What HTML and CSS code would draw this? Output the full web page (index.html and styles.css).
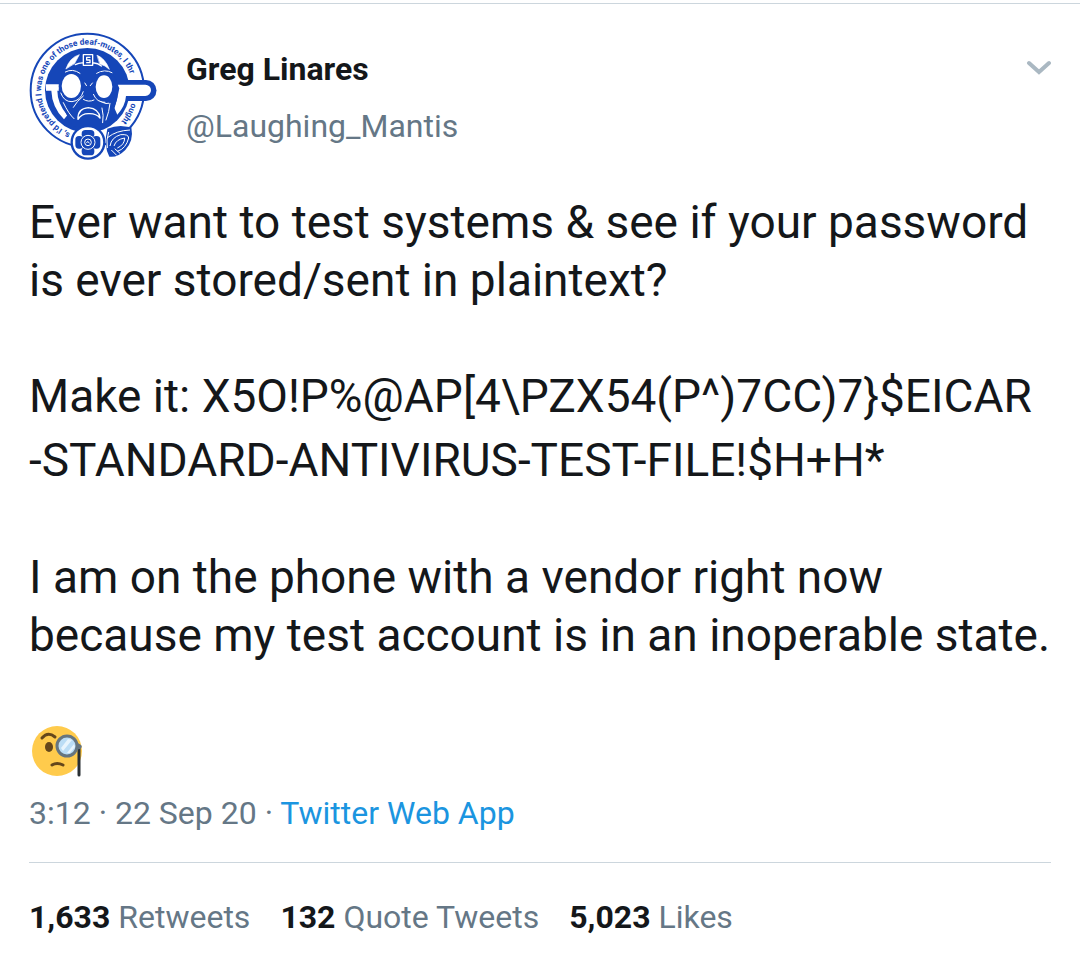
FILE: index.html
```
<!DOCTYPE html>
<html lang="en">
<head>
    <meta charset="UTF-8">
    <meta name="viewport" content="width=device-width, initial-scale=1.0">
    <title>Greg Linares (@Laughing_Mantis)</title>
    <link rel="stylesheet" href="styles.css">
</head>
<body>
    <article class="tweet">
        <header class="tweet-header">
            <svg class="avatar" viewBox="27 36 384 384" role="img" aria-label="Gas mask logo">
                <defs>
                    <path id="ring" d="M151 340 A138 138 0 1 1 338 232 A138 138 0 0 1 250 341"/>
                </defs>
                <!-- outer ring -->
                <circle cx="202" cy="211" r="170" fill="#fff" stroke="#1546b8" stroke-width="6"/>
                <circle cx="202" cy="211" r="127" fill="#1546b8"/>
                <text class="ring-text"><textPath href="#ring">s, I'd pretend I was one of those deaf-mutes, I thr<tspan dx="88">ought</tspan></textPath></text>
                <!-- bar on the left and the long visor on the right -->
                <path d="M78 193 H130 V212 H112 Q112 250 142 286 L132 298 Q96 262 94 212 H78 Z" fill="#fff"/>
                <path d="M276 180 H378 A31 31 0 0 1 378 243 H276 Z" fill="#1546b8"/>
                <path d="M288 194 H376 A17 17 0 0 1 376 228 H318 Q316 258 292 284 L282 262 Q294 240 292 220 L288 216 Z" fill="#fff"/>
                <!-- mask -->
                <path d="M126 158 Q146 96 202 92 Q264 96 278 158 L298 205 Q288 262 264 318 Q210 350 160 318 Q130 280 116 210 Z" fill="#1546b8"/>
                <g fill="none" stroke="#fff" stroke-linecap="round" stroke-linejoin="round">
                    <path d="M138 146 Q150 112 178 104 L164 130 Z" fill="#fff" stroke-width="2"/>
                    <path d="M232 106 Q256 116 268 148 Q256 136 240 132 Z" fill="#fff" stroke-width="2"/>
                    <path d="M166 134 Q178 128 190 129 M220 129 Q232 128 244 138" stroke-width="4"/>
                    <path d="M190 104 H218 V136 H190 Z" stroke-width="4"/>
                    <path d="M210 112 H200 V120 H210 V128 H200" stroke-width="4"/>
                    <path d="M136 156 Q158 144 180 160 M230 160 Q254 146 276 158" stroke-width="3"/>
                    <path d="M174 298 Q172 266 205 263 Q237 266 240 294 Q228 280 207 281 Q186 280 174 298 Z" stroke-width="4"/>
                    <path d="M190 238 Q205 248 222 240 M130 248 Q146 282 162 296 M160 262 Q170 244 190 228" stroke-width="3"/>
                    <path d="M226 228 Q250 256 266 250 M246 264 Q252 286 248 308 M270 250 Q268 274 258 300" stroke-width="3"/>
                </g>
                <!-- goggles -->
                <ellipse cx="154" cy="199" rx="38" ry="43" fill="#1546b8"/>
                <ellipse cx="154" cy="198" rx="29" ry="36" fill="#fff"/>
                <ellipse cx="253" cy="200" rx="40" ry="45" fill="#1546b8"/>
                <ellipse cx="252" cy="200" rx="25" ry="34" fill="#fff"/>
                <path d="M194 188 L200 198 M218 188 L210 198" stroke="#fff" stroke-width="3"/>
                <path d="M122 218 Q132 246 156 245 Q182 242 190 214 M220 222 Q230 248 256 247" fill="none" stroke="#fff" stroke-width="3"/>
                <!-- side filter -->
                <path d="M262 326 Q282 318 302 318 L334 322 Q342 362 316 390 Q292 414 268 410 Q250 376 262 326 Z" fill="#1546b8"/>
                <g fill="none" stroke="#fff" stroke-width="3">
                    <path d="M264 352 Q288 332 330 330"/>
                    <path d="M270 378 Q274 352 302 344 Q326 342 326 354 Q318 386 292 394"/>
                    <path d="M282 378 Q288 358 314 354 Q314 374 292 384"/>
                    <path d="M274 390 L290 406 M284 386 L300 400"/>
                    <path d="M266 336 Q258 360 262 384"/>
                </g>
                <!-- front filter -->
                <circle cx="204" cy="367" r="49" fill="#fff" stroke="#1546b8" stroke-width="7"/>
                <g fill="#1546b8">
                    <rect x="185" y="330" width="38" height="24" rx="11"/>
                    <rect x="185" y="381" width="38" height="25" rx="11"/>
                    <rect x="166" y="348" width="24" height="38" rx="11"/>
                    <rect x="217" y="348" width="24" height="38" rx="11"/>
                    <circle cx="204" cy="367" r="21" stroke="#fff" stroke-width="3"/>
                </g>
                <circle cx="204" cy="367" r="10" fill="none" stroke="#fff" stroke-width="3"/>
                <path d="M199 368 Q205 360 208 370" fill="none" stroke="#fff" stroke-width="3"/>
            </svg>
            <div class="author">
                <strong class="name">Greg Linares</strong>
                <span class="handle">@Laughing_Mantis</span>
            </div>
            <button class="menu" type="button" aria-label="More">
                <svg viewBox="0 0 26 16" width="26" height="16">
                    <path d="M4 3 L14 12 L24 3" fill="none" stroke="#aab8c2" stroke-width="4" stroke-linecap="round"/>
                </svg>
            </button>
        </header>

        <div class="tweet-text">
            <p>Ever want to test systems &amp; see if your password is ever stored/sent in plaintext?</p>
            <p class="code">Make it: X5O!P%@AP[4\PZX54(P^)7CC)7}$EICAR<br>-STANDARD-ANTIVIRUS-TEST-FILE!$H+H*</p>
            <p>I am on the phone with a vendor right now because my test account is in an inoperable state.</p>
        </div>

        <svg class="emoji" viewBox="-1 0 54 54" role="img" aria-label="Face with monocle">
            <circle cx="27" cy="27" r="25" fill="#ffcb4c"/>
            <ellipse cx="19" cy="23" rx="4" ry="5" fill="#65471b"/>
            <path d="M12 14 Q18 7 25 13" fill="none" stroke="#65471b" stroke-width="3" stroke-linecap="round"/>
            <path d="M22 41 Q27 38 33 41" fill="none" stroke="#65471b" stroke-width="3" stroke-linecap="round"/>
            <path d="M49 22 V51" stroke="#292f33" stroke-width="3" stroke-linecap="round"/>
            <path d="M46 18 L51 21 Q53 23 50 25 L46 26 Z" fill="#66757f"/>
            <circle cx="37" cy="22" r="10" fill="#bbddf5" stroke="#66757f" stroke-width="3"/>
            <path d="M31 24 L38 15 L42 16 L33 27 Z M37 29 L44 20 L45 23 L40 29 Z" fill="#e8f5fd"/>
        </svg>

        <p class="meta"><time>3:12 · 22 Sep 20</time> · <a href="#">Twitter Web App</a></p>

        <footer class="stats">
            <a href="#"><strong>1,633</strong> Retweets</a>
            <a href="#"><strong>132</strong> Quote Tweets</a>
            <a href="#"><strong>5,023</strong> Likes</a>
        </footer>
    </article>
</body>
</html>
```
FILE: styles.css
```
* {
    box-sizing: border-box;
}
body {
    margin: 0;
    padding-top: 3px;
    background-color: #fff;
    color: #14171a;
    font-family: Roboto, sans-serif;
    font-size: 32px;
    line-height: 40px;
}
p {
    margin: 0;
}
a {
    color: #1b95e0;
    text-decoration: none;
}
.tweet {
    padding: 28px 29px 0;
    border-top: 1px solid #ccd6dd;
}
.tweet-header {
    display: flex;
    align-items: flex-start;
}
.avatar {
    width: 128px;
    height: 128px;
}
.ring-text {
    font-family: Roboto, sans-serif;
    font-size: 25px;
    font-weight: bold;
    fill: #1546b8;
}
.author {
    display: flex;
    flex: 1;
    flex-direction: column;
    gap: 17px;
    padding: 17px 0 0 29px;
}
.handle {
    color: #657786;
}
.menu {
    margin-top: 28px;
    padding: 0;
    border: 0;
    background: none;
    line-height: 0;
}
/* tweet body */
.tweet-text {
    margin-top: 33px;
    font-size: 46px;
    line-height: 58px;
}
.tweet-text .code {
    margin: 55px 0 56px;
    line-height: 64px;
}
.emoji {
    display: block;
    width: 54px;
    height: 54px;
    margin-top: 60px;
}
.meta {
    margin-top: 15px;
    padding-bottom: 29px;
    border-bottom: 1px solid #ccd6dd;
    color: #657786;
}
/* counters */
.stats {
    display: flex;
    gap: 30px;
    padding: 34px 0;
}
.stats a {
    color: #657786;
}
.stats strong {
    color: #14171a;
}
```
